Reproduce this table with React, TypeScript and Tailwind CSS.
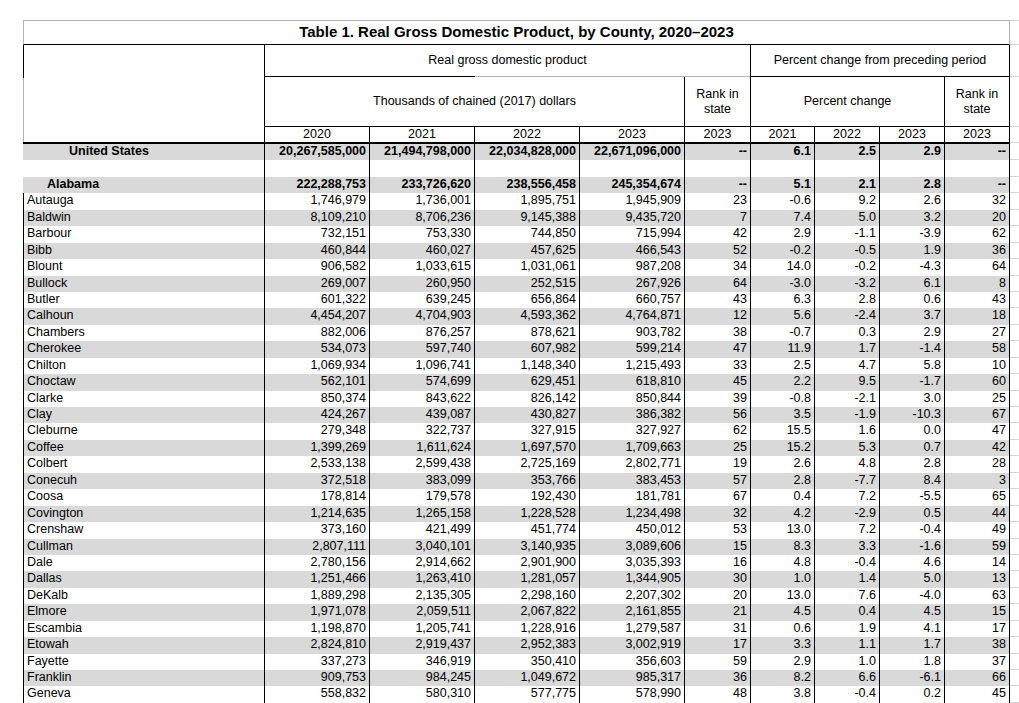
import React from "react";

type Row = [string, string, string, string, string, string, string, string, string, string];

const raw = `Autauga|1,746,979|1,736,001|1,895,751|1,945,909|23|-0.6|9.2|2.6|32
Baldwin|8,109,210|8,706,236|9,145,388|9,435,720|7|7.4|5.0|3.2|20
Barbour|732,151|753,330|744,850|715,994|42|2.9|-1.1|-3.9|62
Bibb|460,844|460,027|457,625|466,543|52|-0.2|-0.5|1.9|36
Blount|906,582|1,033,615|1,031,061|987,208|34|14.0|-0.2|-4.3|64
Bullock|269,007|260,950|252,515|267,926|64|-3.0|-3.2|6.1|8
Butler|601,322|639,245|656,864|660,757|43|6.3|2.8|0.6|43
Calhoun|4,454,207|4,704,903|4,593,362|4,764,871|12|5.6|-2.4|3.7|18
Chambers|882,006|876,257|878,621|903,782|38|-0.7|0.3|2.9|27
Cherokee|534,073|597,740|607,982|599,214|47|11.9|1.7|-1.4|58
Chilton|1,069,934|1,096,741|1,148,340|1,215,493|33|2.5|4.7|5.8|10
Choctaw|562,101|574,699|629,451|618,810|45|2.2|9.5|-1.7|60
Clarke|850,374|843,622|826,142|850,844|39|-0.8|-2.1|3.0|25
Clay|424,267|439,087|430,827|386,382|56|3.5|-1.9|-10.3|67
Cleburne|279,348|322,737|327,915|327,927|62|15.5|1.6|0.0|47
Coffee|1,399,269|1,611,624|1,697,570|1,709,663|25|15.2|5.3|0.7|42
Colbert|2,533,138|2,599,438|2,725,169|2,802,771|19|2.6|4.8|2.8|28
Conecuh|372,518|383,099|353,766|383,453|57|2.8|-7.7|8.4|3
Coosa|178,814|179,578|192,430|181,781|67|0.4|7.2|-5.5|65
Covington|1,214,635|1,265,158|1,228,528|1,234,498|32|4.2|-2.9|0.5|44
Crenshaw|373,160|421,499|451,774|450,012|53|13.0|7.2|-0.4|49
Cullman|2,807,111|3,040,101|3,140,935|3,089,606|15|8.3|3.3|-1.6|59
Dale|2,780,156|2,914,662|2,901,900|3,035,393|16|4.8|-0.4|4.6|14
Dallas|1,251,466|1,263,410|1,281,057|1,344,905|30|1.0|1.4|5.0|13
DeKalb|1,889,298|2,135,305|2,298,160|2,207,302|20|13.0|7.6|-4.0|63
Elmore|1,971,078|2,059,511|2,067,822|2,161,855|21|4.5|0.4|4.5|15
Escambia|1,198,870|1,205,741|1,228,916|1,279,587|31|0.6|1.9|4.1|17
Etowah|2,824,810|2,919,437|2,952,383|3,002,919|17|3.3|1.1|1.7|38
Fayette|337,273|346,919|350,410|356,603|59|2.9|1.0|1.8|37
Franklin|909,753|984,245|1,049,672|985,317|36|8.2|6.6|-6.1|66
Geneva|558,832|580,310|577,775|578,990|48|3.8|-0.4|0.2|45`;

const counties: Row[] = raw.split("\n").map((l) => l.split("|") as Row);

// widths of the value columns, border included
const valueCols = ["w-[105px]", "w-[105px]", "w-[105px]", "w-[105px]", "w-[66px]", "w-[64px]", "w-[65px]", "w-[65px]", "w-[65px]"];

function BodyRow({ row, shaded, kind }: { row: Row | null; shaded: boolean; kind: "us" | "state" | "county" | "blank" }) {
  const bold = kind === "us" || kind === "state";
  const bg = shaded ? "bg-[#d9d9d9]" : "bg-white";
  const leftBorder = kind === "county" ? "border-l-black" : shaded ? "border-l-[#d9d9d9]" : "border-l-white";
  const indent = kind === "us" ? "pl-[45px]" : kind === "state" ? "pl-[23px]" : "pl-[3px]";

  return (
    <div className="flex h-[16.45px] leading-[15.5px]">
      <div className={`flex w-[987px] shrink-0 ${bg} ${bold ? "font-bold" : ""}`}>
        <div className={`w-[242px] shrink-0 overflow-hidden whitespace-nowrap border-l border-r border-r-black ${leftBorder} ${indent}`}>
          {row ? row[0] : ""}
        </div>
        {valueCols.map((w, i) => (
          <div key={i} className={`${w} shrink-0 overflow-hidden whitespace-nowrap border-r border-black pr-[3px] text-right`}>
            {row ? row[i + 1] : ""}
          </div>
        ))}
      </div>
      <div className="flex-1 border-b border-[#d4d4d4] bg-white" />
    </div>
  );
}

export default function App() {
  const us: Row = ["United States", "20,267,585,000", "21,494,798,000", "22,034,828,000", "22,671,096,000", "--", "6.1", "2.5", "2.9", "--"];
  const alabama: Row = ["Alabama", "222,288,753", "233,726,620", "238,556,458", "245,354,674", "--", "5.1", "2.1", "2.8", "--"];

  return (
    <div className="h-[703px] w-[1019px] overflow-hidden bg-white pl-[23px] pt-[20px] font-['Liberation_Sans',Arial,sans-serif] text-[12.5px] text-black">
      {/* header block */}
      <div className="flex">
        <div className="w-[987px] shrink-0">
          <div className="flex h-[25px] items-center justify-center border border-[#b4b4b4] border-b-black text-[15px] font-bold">
            Table 1. Real Gross Domestic Product, by County, 2020–2023
          </div>

          <div className="flex">
            {/* merged stub cell */}
            <div className="flex w-[242px] shrink-0 flex-col">
              <div className="h-[33px] border-l border-r border-black" />
              <div className="h-[64px] border-l border-r border-l-[#b4b4b4] border-r-black" />
            </div>

            <div className="flex w-[745px] flex-col">
              <div className="flex h-[32px]">
                <div className="flex w-[486px] shrink-0 flex-col border-r border-black">
                  <div className="flex flex-1 items-center justify-center">Real gross domestic product</div>
                  <div className="flex h-px">
                    <div className="w-[210px] bg-black" />
                    <div className="flex-1 bg-[#b4b4b4]" />
                  </div>
                </div>
                <div className="flex w-[259px] shrink-0 items-center justify-center border-b border-r border-black">
                  Percent change from preceding period
                </div>
              </div>

              <div className="flex h-[50px] border-b border-black text-center leading-[14.5px]">
                <div className="flex w-[420px] shrink-0 items-center justify-center border-r border-black">
                  Thousands of chained (2017) dollars
                </div>
                <div className="flex w-[66px] shrink-0 items-center justify-center border-r border-black">
                  Rank in
                  <br />
                  state
                </div>
                <div className="flex w-[194px] shrink-0 items-center justify-center border-r border-black">
                  Percent change
                </div>
                <div className="flex w-[65px] shrink-0 items-center justify-center border-r border-black">
                  Rank in
                  <br />
                  state
                </div>
              </div>

              <div className="flex h-[15px] leading-[15px]">
                {["2020", "2021", "2022", "2023", "2023", "2021", "2022", "2023", "2023"].map((y, i) => (
                  <div key={i} className={`${valueCols[i]} shrink-0 border-r border-black text-center`}>
                    {y}
                  </div>
                ))}
              </div>
            </div>
          </div>

          <div className="h-[2px] bg-black" />
        </div>

        {/* spreadsheet gridlines beyond the table */}
        <div className="flex flex-1 flex-col">
          <div className="h-[25px] border-b border-t border-[#d4d4d4]" />
          <div className="h-[32px] border-b border-[#d4d4d4]" />
          <div className="h-[50px] border-b border-[#d4d4d4]" />
          <div className="h-[16px] border-b border-[#d4d4d4]" />
          <div className="h-px" />
        </div>
      </div>

      {/* body */}
      <BodyRow row={us} shaded kind="us" />
      <BodyRow row={null} shaded={false} kind="blank" />
      <BodyRow row={alabama} shaded kind="state" />
      {counties.map((r, i) => (
        <BodyRow key={r[0]} row={r} shaded={i % 2 === 1} kind="county" />
      ))}
    </div>
  );
}
